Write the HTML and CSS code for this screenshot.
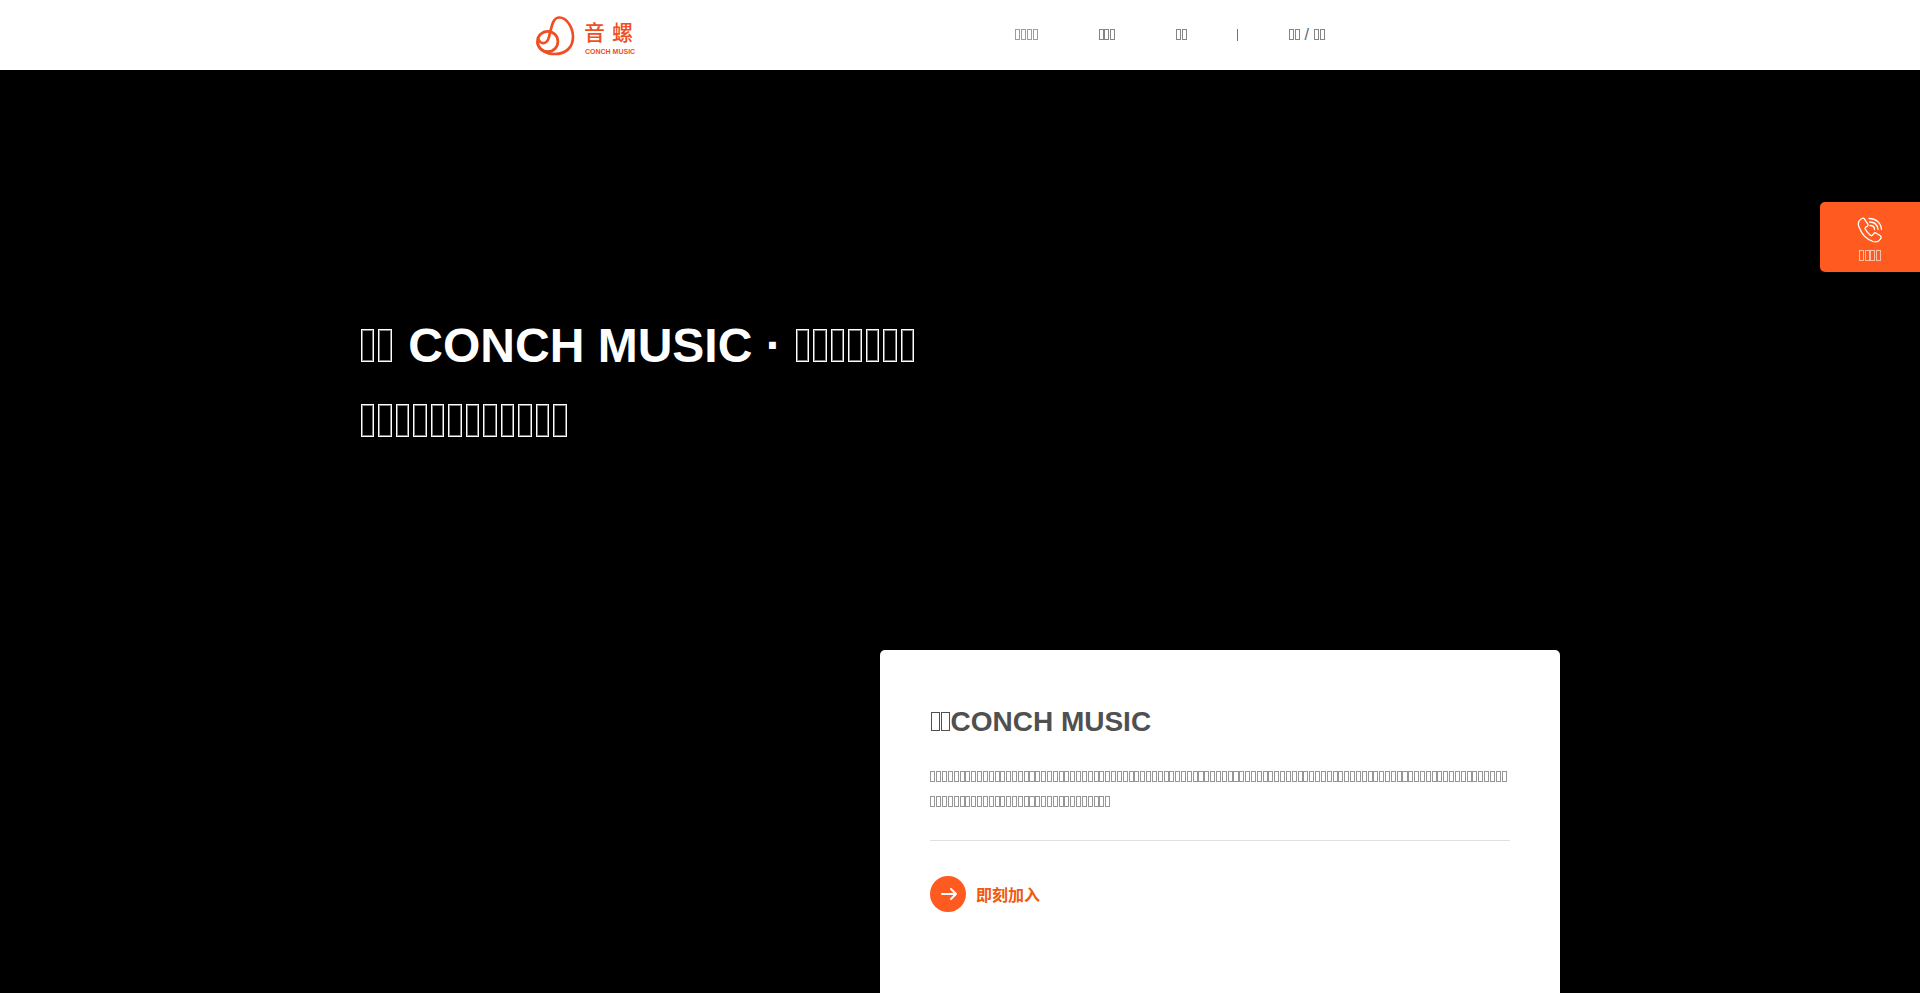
FILE: index.html
```
<!DOCTYPE html>
<html lang="zh">
<head>
    <meta charset="UTF-8">
    <meta name="viewport" content="width=device-width, initial-scale=1.0">
    <title>CONCH MUSIC</title>
    <link rel="stylesheet" href="styles.css">
</head>
<body>
    <header class="header">
        <div class="header-inner">
            <a class="logo" href="#" aria-label="CONCH MUSIC">
                <svg width="100" height="42" viewBox="0 0 100 42">
                    <g fill="none" stroke="#f04e23" stroke-width="2.7" stroke-linecap="round">
                        <circle cx="11.700" cy="27.500" r="10.200"/>
                        <path d="M2 24 C4 31 11 31 13 23 C16 11 17 3.500 23.500 3.500 C31 3.500 37 14 37 23 C37 34 29 40 19 40 C9 40 2 35 1.500 28"/>
                    </g>
                    <text class="logo-cn" x="48" y="26">音</text>
                    <text class="logo-cn" x="76" y="26">螺</text>
                    <text class="logo-en" x="49" y="40">CONCH MUSIC</text>
                </svg>
            </a>
            <nav class="nav">
                <a class="active" href="#"><span class="glyphs" data-count="4"></span></a>
                <a href="#"><span class="glyphs" data-count="3"></span></a>
                <a href="#"><span class="glyphs" data-count="2"></span></a>
                <span class="divider"></span>
                <a href="#"><span class="glyphs" data-count="2"></span> / <span class="glyphs" data-count="2"></span></a>
            </nav>
        </div>
    </header>

    <main class="hero">
        <h1><span class="glyphs" data-count="2"></span> CONCH MUSIC · <span class="glyphs" data-count="7"></span><br><span class="glyphs" data-count="12"></span></h1>

        <section class="card">
            <h2><span class="glyphs" data-count="2"></span>CONCH MUSIC</h2>
            <p><span class="glyphs" data-count="130"></span></p>
            <a class="join" href="#">
                <svg width="36" height="36" viewBox="0 0 36 36">
                    <circle cx="18" cy="18" r="18" fill="#ff5a1f"/>
                    <path d="M12 18h14M21 13l5 5-5 5" fill="none" stroke="#fff" stroke-width="2" stroke-linecap="round" stroke-linejoin="round"/>
                </svg>
                <span>即刻加入</span>
            </a>
        </section>
    </main>

    <!-- Contact tab on the right edge -->
    <a class="contact" href="#">
        <svg width="26" height="26" viewBox="0 0 26 26" fill="none" stroke="#fff" stroke-width="1.3" stroke-linecap="round" stroke-linejoin="round">
            <path d="M5 1.500C2 3 .5 6 2 10c2.500 6.500 8 12.500 14 14.500 3.500 1 6.500-.5 8-3.500.4-1 0-1.700-.7-2.200l-4-2.600c-.9-.6-1.900-.4-2.500.4l-1.300 1.600c-.5.6-1.200.6-1.800.2-2.500-1.700-4.300-3.900-5.500-6.400-.3-.7-.1-1.300.5-1.700l1.500-1c.8-.6 1-1.500.5-2.400L7.500 2.200C7 1.200 6 1 5 1.500z"/>
            <path d="M12 1.500c7 0 12 4.500 12.500 11M12.500 5c5 0 8 3 8.500 7.500M13 8.500c2.500 0 4.500 1.500 4.500 4"/>
        </svg>
        <span class="glyphs" data-count="4"></span>
    </a>

    <script>
        // Fill every placeholder run with its glyph boxes
        document.querySelectorAll('.glyphs').forEach(run => {
            run.innerHTML = '<i></i>'.repeat(Number(run.dataset.count));
        });
    </script>
</body>
</html>
```
FILE: styles.css
```
* {
    box-sizing: border-box;
}

body {
    margin: 0;
    min-height: 100vh;
    display: flex;
    flex-direction: column;
    background-color: #000;
    font-family: "Liberation Sans", Arial, sans-serif;
    font-size: 16px;
    color: #505050;
}

a {
    color: inherit;
    text-decoration: none;
}

/* Empty glyph boxes, sized with the surrounding text */
.glyphs i {
    display: inline-block;
    width: 0.316em;
    height: 0.69em;
    margin: 0 0.025em;
    border: 1px solid currentColor;
    opacity: 0.6;
}

/* Header */
.header {
    background-color: #fff;
}

.header-inner {
    display: flex;
    align-items: center;
    justify-content: space-between;
    max-width: 848px;
    height: 70px;
    margin: 0 auto;
}

.logo svg {
    display: block;
}

.logo-cn {
    font-family: "Noto Sans CJK SC", sans-serif;
    font-size: 21px;
    font-weight: 500;
    fill: #f04e23;
}

.logo-en {
    font-size: 7px;
    font-weight: bold;
    fill: #f04e23;
}

.nav {
    display: flex;
    align-items: center;
    padding-right: 29px;
    color: #666;
}

.nav a {
    padding: 0 30px;
}

.nav .glyphs i {
    opacity: 0.8;
}

.nav .active {
    color: #f0622d;
}

.divider {
    width: 1px;
    height: 12px;
    margin: 0 20px;
    background-color: #707070;
}

/* Hero */
.hero {
    flex: 1;
    display: flex;
    flex-direction: column;
    width: 100%;
    max-width: 1200px;
    margin: 0 auto;
}

h1 {
    margin: 238px 0 192px;
    font-size: 48px;
    line-height: 75px;
    color: #fff;
}

h1 .glyphs i {
    width: 0.275em;
    margin: 0 0.07em 0 0.02em;
    box-shadow: inset 0 0 0 1px rgba(255, 255, 255, 0.5);
    opacity: 1;
}

.card {
    flex: 1;
    align-self: flex-end;
    width: 100%;
    max-width: 680px;
    padding: 50px;
    background-color: #fff;
    border-radius: 5px 5px 0 0;
}

.card h2 {
    margin: 0 0 20px;
    font-size: 28px;
    line-height: 44px;
}

.card h2 .glyphs i {
    opacity: 1;
}

.card p {
    margin: 0;
    padding-bottom: 26px;
    border-bottom: 1px solid #e0e0e0;
    line-height: 25px;
}

.join {
    display: flex;
    align-items: center;
    gap: 10px;
    margin-top: 35px;
    font-family: "Noto Sans CJK SC", sans-serif;
    font-weight: bold;
    color: #f0590f;
}

/* Contact tab */
.contact {
    position: fixed;
    top: 202px;
    right: 0;
    width: 100px;
    height: 70px;
    padding-top: 15px;
    display: flex;
    flex-direction: column;
    align-items: center;
    gap: 4px;
    background-color: #ff5a1f;
    border-radius: 5px 0 0 5px;
    color: #fff;
}
```
